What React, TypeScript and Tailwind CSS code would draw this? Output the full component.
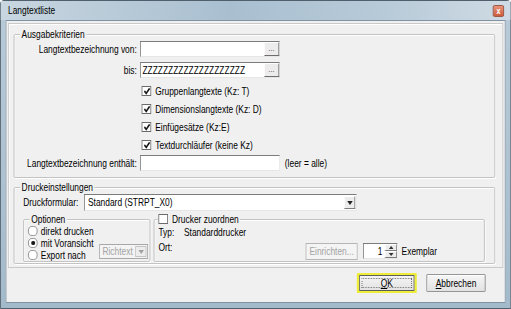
import React from 'react';

// Der Dialog ist horizontal gestaucht (Screenshot 640 -> 511), daher wird das
// Fenster in voller Breite gebaut und per scale-x auf 511px gebracht.

const Check = ({ checked = false }: { checked?: boolean }) => (
  <div className="w-[12px] h-[10px] shrink-0 border border-[#6b6b6b] bg-white flex items-center justify-center">
    {checked && (
      <svg width="9" height="8" viewBox="0 0 9 8">
        <path d="M1.5 4 L3.8 6.3 L8 1.3" stroke="#1a1a1a" strokeWidth="1.8" fill="none" />
      </svg>
    )}
  </div>
);

const Radio = ({ checked = false }: { checked?: boolean }) => (
  <div className="w-[12px] h-[10px] shrink-0 rounded-full border border-[#8c8c8c] bg-white flex items-center justify-center">
    {checked && <div className="w-[5px] h-[4px] rounded-full bg-[#1a1a1a]" />}
  </div>
);

const Dots = () => (
  <div className="w-[19px] h-full shrink-0 bg-[#ececec] border border-t-white border-l-white border-r-[#6e6e6e] border-b-[#6e6e6e] flex items-end justify-center pb-[3px] text-[9px] leading-[8px] text-[#555]">
    ...
  </div>
);

const Arrow = ({ color = '#222' }: { color?: string }) => (
  <svg width="7" height="4" viewBox="0 0 7 4">
    <path d="M0 0 H7 L3.5 4 Z" fill={color} />
  </svg>
);

const sunken =
  'border border-t-[#7b7b7b] border-l-[#7b7b7b] border-r-[#e6e6e6] border-b-[#e6e6e6] bg-white';

const group = 'border border-[#bdbdbd] rounded-[2px] shadow-[inset_1px_1px_0_#fff,1px_1px_0_#fff]';

const raised =
  'bg-[#ececec] border border-t-white border-l-white border-r-[#7a7a7a] border-b-[#7a7a7a] flex items-center justify-center';

export default function App() {
  return (
    <div className="w-[511px] h-[309px] overflow-hidden">
      <div className="w-[639px] h-[309px] origin-top-left scale-x-[0.8] flex flex-col border border-[#3c4d5b] rounded-t-[5px] bg-[linear-gradient(to_bottom,#b9cbd9,#a3bacb)] font-['Liberation_Sans',Arial,sans-serif] text-[10.5px] leading-[13px] text-black">
        {/* Titelleiste */}
        <div className="h-[19px] shrink-0 flex items-center justify-between pl-[9px] pr-[8px] bg-[linear-gradient(to_right,#c8d6e0,#a9bfd0_45%,#b7cad8_75%,#cfdbe4)]">
          <span>Langtextliste</span>
          <div className="w-[14px] h-[12px] rounded-[2px] border border-[#9a4a33] bg-[linear-gradient(to_bottom,#e8947a,#cc5a3c)] flex items-center justify-center text-white text-[9px] leading-[8px] font-bold">
            x
          </div>
        </div>

        <div className="flex-1 pl-[6px] pr-[6px] pb-[5px]">
          <div className="h-full bg-[#f0f0f0] border border-[#7f93a4] flex flex-col">
            {/* Rahmen */}
            <div className="mx-[2px] mt-[2px] border border-[#c9c9c9] shadow-[inset_1px_1px_0_#fff] pt-[4px] pb-[3px] pl-[6px] pr-[9px]">
              <fieldset className={`${group} pb-[6px]`}>
                <legend className="ml-[7px] px-[2px] leading-[13px] bg-[#f0f0f0]">Ausgabekriterien</legend>

                <div className="flex items-center h-[16px]">
                  <div className="w-[153px] text-right">Langtextbezeichnung von:</div>
                  <div className={`ml-[4px] w-[175px] h-[16px] flex ${sunken}`}>
                    <div className="flex-1" />
                    <Dots />
                  </div>
                </div>

                <div className="flex items-center h-[16px] mt-[5px]">
                  <div className="w-[153px] text-right">bis:</div>
                  <div className={`ml-[4px] w-[175px] h-[16px] flex ${sunken}`}>
                    <div className="flex-1 pl-[2px] leading-[14px] overflow-hidden whitespace-nowrap">
                      ZZZZZZZZZZZZZZZZZZZZ
                    </div>
                    <Dots />
                  </div>
                </div>

                <div className="mt-[4px] pl-[159px]">
                  {[
                    'Gruppenlangtexte (Kz: T)',
                    'Dimensionslangtexte (Kz: D)',
                    'Einfügesätze (Kz:E)',
                    'Textdurchläufer (keine Kz)',
                  ].map((t) => (
                    <div key={t} className="h-[18px] flex items-center gap-[5px]">
                      <Check checked />
                      <span>{t}</span>
                    </div>
                  ))}
                </div>

                <div className="flex items-center h-[16px] mt-[1px]">
                  <div className="w-[153px] text-right whitespace-nowrap">Langtextbezeichnung enthält:</div>
                  <div className={`ml-[4px] w-[175px] h-[16px] ${sunken}`} />
                  <span className="ml-[6px]">(leer = alle)</span>
                </div>
              </fieldset>

              <fieldset className={`${group} mt-[3px] pb-[1px]`}>
                <legend className="ml-[7px] px-[2px] leading-[13px] bg-[#f0f0f0]">Druckeinstellungen</legend>

                <div className="flex items-center h-[17px] pl-[11px]">
                  <div className="w-[76px]">Druckformular:</div>
                  <div className={`w-[341px] h-[17px] flex items-center ${sunken}`}>
                    <div className="flex-1 pl-[4px]">Standard (STRPT_X0)</div>
                    <div className={`w-[14px] h-[13px] mr-[1px] ${raised}`}>
                      <Arrow />
                    </div>
                  </div>
                </div>

                <div className="flex mt-[2px] pl-[11px] gap-[4px]">
                  {/* Optionen */}
                  <fieldset className={`${group} w-[159px]`}>
                    <legend className="ml-[7px] px-[2px] leading-[12px] bg-[#f0f0f0]">Optionen</legend>
                    <div className="flex h-[36px]">
                      <div className="w-[94px] pl-[5px]">
                        <div className="h-[12px] flex items-center gap-[4px]">
                          <Radio />
                          <span>direkt drucken</span>
                        </div>
                        <div className="h-[12px] flex items-center gap-[4px]">
                          <Radio checked />
                          <span>mit Voransicht</span>
                        </div>
                        <div className="h-[12px] flex items-center gap-[4px]">
                          <Radio />
                          <span>Export nach</span>
                        </div>
                      </div>
                      <div className="self-end mb-[2px] w-[61px] h-[15px] flex items-center border border-[#a8a8a8] bg-[#f4f4f4] text-[#a3a3a3]">
                        <div className="flex-1 pl-[3px]">Richtext</div>
                        <div className="w-[14px] h-[11px] mr-[1px] border border-[#c4c4c4] bg-[#ececec] flex items-center justify-center">
                          <Arrow color="#a0a0a0" />
                        </div>
                      </div>
                    </div>
                  </fieldset>

                  {/* Drucker zuordnen */}
                  <fieldset className={`${group} w-[414px]`}>
                    <legend className="ml-[4px] px-[1px] h-[12px] leading-[12px] bg-[#f0f0f0] flex items-center gap-[5px]">
                      <Check />
                      <span className="pr-[1px]">Drucker zuordnen</span>
                    </legend>
                    <div className="flex items-end h-[36px] pb-[1px]">
                      <div className="w-[189px] pl-[5px] self-start pt-[1px]">
                        <div className="h-[13px] flex">
                          <span className="w-[32px]">Typ:</span>
                          <span>Standarddrucker</span>
                        </div>
                        <div className="h-[13px] mt-[2px]">Ort:</div>
                      </div>
                      <div className="w-[65px] h-[17px] border border-[#b5b5b5] bg-[#f4f4f4] flex items-center justify-center text-[#a3a3a3]">
                        Einrichten...
                      </div>
                      <div className={`ml-[7px] w-[43px] h-[16px] mb-[1px] flex ${sunken}`}>
                        <div className="flex-1 text-right pr-[3px] leading-[14px]">1</div>
                        <div className="w-[15px] flex flex-col">
                          <div className={`flex-1 ${raised}`}>
                            <svg width="6" height="3" viewBox="0 0 6 3">
                              <path d="M0 3 H6 L3 0 Z" fill="#333" />
                            </svg>
                          </div>
                          <div className={`flex-1 ${raised}`}>
                            <svg width="6" height="3" viewBox="0 0 6 3">
                              <path d="M0 0 H6 L3 3 Z" fill="#333" />
                            </svg>
                          </div>
                        </div>
                      </div>
                      <span className="ml-[5px] mb-[2px]">Exemplar</span>
                    </div>
                  </fieldset>
                </div>
              </fieldset>
            </div>

            {/* Schaltflächen */}
            <div className="flex justify-end items-start gap-[12px] mt-[5px] pr-[24px]">
              <div className="w-[75px] h-[20px] border-2 border-x-[3px] border-[#eded3a] rounded-[1px]">
                <div className="h-full border border-[#5e5e5e] bg-[linear-gradient(to_bottom,#f4f4f4,#e3e3e3)] p-[2px]">
                  <div className="h-full border border-dotted border-[#6a6a6a] flex items-center justify-center">
                    <span>
                      <span className="underline">O</span>K
                    </span>
                  </div>
                </div>
              </div>
              <div className="w-[74px] h-[18px] mt-[1px] border border-[#8a8a8a] rounded-[1px] bg-[linear-gradient(to_bottom,#f6f6f6,#e2e2e2)] shadow-[inset_1px_1px_0_#fff] flex items-center justify-center">
                <span>
                  <span className="underline">A</span>bbrechen
                </span>
              </div>
            </div>
          </div>
        </div>
      </div>
    </div>
  );
}
